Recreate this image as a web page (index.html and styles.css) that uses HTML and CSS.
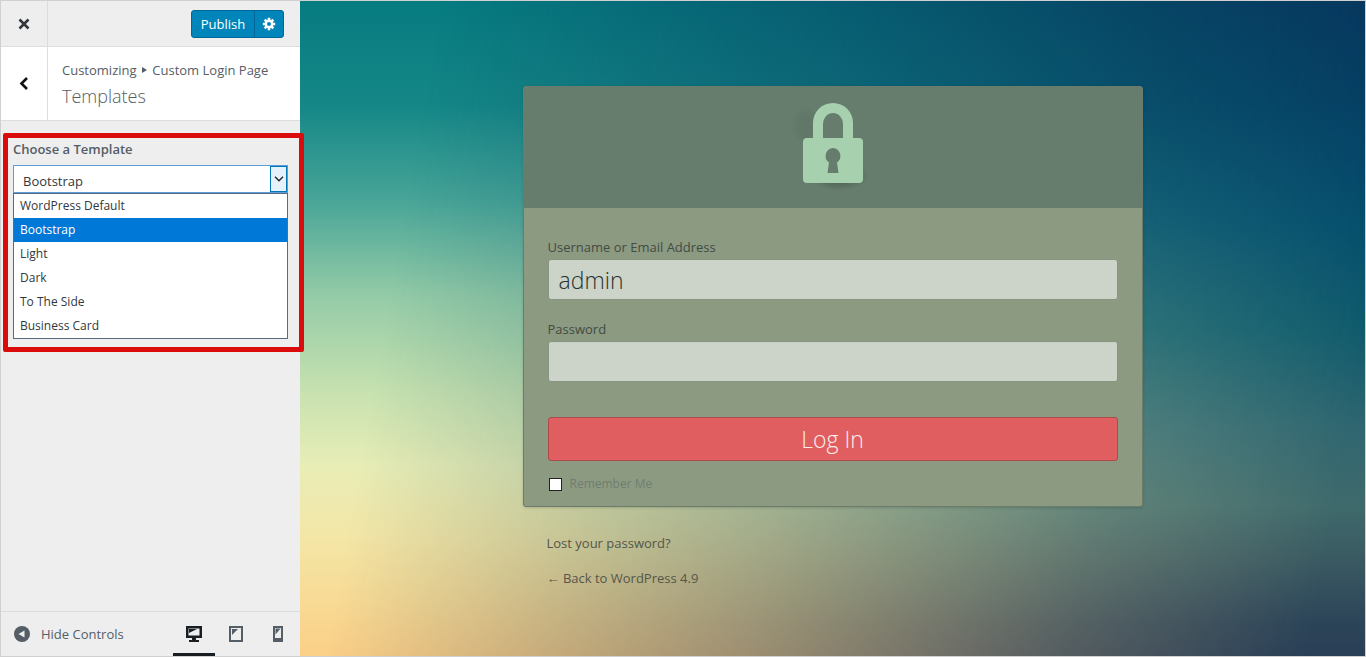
FILE: index.html
```
<!DOCTYPE html>
<html lang="en">

<head>
    <meta charset="UTF-8">
    <meta name="viewport" content="width=device-width, initial-scale=1.0">
    <title>Customize: Custom Login Page</title>
    <link rel="stylesheet" href="styles.css">
</head>

<body>

    <aside class="sidebar">
        <div class="top-bar">
            <button class="close-btn" aria-label="Close">
                <svg width="12" height="12" viewBox="0 0 12 12"><path d="M1.5 1.5l9 9M10.500 1.500l-9 9" stroke="#32373c" stroke-width="2.600"/></svg>
            </button>
            <div class="publish-group">
                <button class="publish-btn">Publish</button>
                <button class="gear-btn" aria-label="Publish settings">
                    <svg width="14" height="14" viewBox="0 0 14 14">
                        <g stroke="#fff" stroke-width="2.600"><path d="M7 .8v12.400M.8 7h12.400M2.700 2.700l8.600 8.600M11.300 2.700l-8.600 8.600"/></g>
                        <circle cx="7" cy="7" r="4.400" fill="#fff"/>
                        <circle cx="7" cy="7" r="2" fill="#0085ba"/>
                    </svg>
                </button>
            </div>
        </div>

        <div class="section-title">
            <button class="back-btn" aria-label="Back">
                <svg width="10" height="14" viewBox="0 0 10 14"><path d="M8 1L2.500 6.500 8 12" fill="none" stroke="#111" stroke-width="2.600"/></svg>
            </button>
            <div class="titles">
                <p class="crumbs">Customizing <svg width="5" height="6" viewBox="0 0 5 6"><path d="M0 0l5 3-5 3z" fill="#555d66"/></svg> Custom Login Page</p>
                <h3>Templates</h3>
            </div>
        </div>

        <div class="controls">
            <label for="template">Choose a Template</label>
            <div class="select-wrap">
                <select id="template">
                    <option>WordPress Default</option>
                    <option selected>Bootstrap</option>
                    <option>Light</option>
                    <option>Dark</option>
                    <option>To The Side</option>
                    <option>Business Card</option>
                </select>
                <span class="arrow">
                    <svg width="10" height="6" viewBox="0 0 10 6"><path d="M1 .8l4 4 4-4" fill="none" stroke="#222" stroke-width="1.300"/></svg>
                </span>
                <ul class="options" role="listbox" aria-label="Templates">
                    <li role="option">WordPress Default</li>
                    <li role="option" class="selected" aria-selected="true">Bootstrap</li>
                    <li role="option">Light</li>
                    <li role="option">Dark</li>
                    <li role="option">To The Side</li>
                    <li role="option">Business Card</li>
                </ul>
            </div>
            <div class="highlight"></div>
        </div>

        <div class="bottom-bar">
            <button class="hide-btn">
                <svg width="16" height="16" viewBox="0 0 16 16"><circle cx="8" cy="8" r="8" fill="#555d66"/><path d="M10.500 4.500v7L4.500 8z" fill="#eee"/></svg>
                Hide Controls
            </button>
            <div class="devices">
                <button class="device active" aria-label="Desktop">
                    <svg width="16" height="16" viewBox="0 0 16 16"><path d="M0 0h16v12h-6v2h3v2H3v-2h3v-2H0zM2.500 2.500v7h11v-7z" fill="#191e23" fill-rule="evenodd"/><path d="M3 3h8L3 7z" fill="#191e23"/></svg>
                </button>
                <button class="device" aria-label="Tablet">
                    <svg width="14" height="16" viewBox="0 0 14 16"><path d="M0 0h14v16H0zM2 2v12h10V2z" fill="#555d66" fill-rule="evenodd"/><path d="M3 3h6L3 9z" fill="#555d66"/></svg>
                </button>
                <button class="device" aria-label="Mobile">
                    <svg width="10" height="16" viewBox="0 0 10 16"><path d="M0 0h10v16H0zM2 2v10h6V2z" fill="#555d66" fill-rule="evenodd"/><path d="M2.500 2.500h5l-5 6z" fill="#555d66"/></svg>
                </button>
            </div>
        </div>
    </aside>

    <main class="preview">
        <div class="login">
            <form class="card">
                <div class="logo">
                    <svg width="96" height="98" viewBox="-10 0 96 98">
                        <defs>
                            <radialGradient id="shade">
                                <stop offset="0.5" stop-color="#56695c"/>
                                <stop offset="1" stop-color="#56695c" stop-opacity="0"/>
                            </radialGradient>
                        </defs>
                        <ellipse cx="44" cy="83" rx="30" ry="15" fill="url(#shade)"/>
                        <ellipse cx="10" cy="32" rx="14" ry="20" fill="url(#shade)" opacity=".3"/>
                        <path d="M18 48V30a20 20 0 0 1 40 0v18z" fill="#a7d1ae"/>
                        <path d="M28 45V31a10 11 0 0 1 20 0v14z" fill="#667d6d"/>
                        <rect x="8" y="45" width="60" height="45" rx="4" fill="#a7d1ae"/>
                        <path d="M38 55a8 8 0 0 1 4 14.500l1.500 10.500h-11l1.500-10.500A8 8 0 0 1 38 55z" fill="#667d6d"/>
                    </svg>
                </div>
                <div class="fields">
                    <label for="user">Username or Email Address</label>
                    <input type="text" id="user" class="input" value="admin">
                    <label for="pass">Password</label>
                    <input type="password" id="pass" class="input">
                    <button type="button" class="login-btn">Log In</button>
                    <div class="remember">
                        <input type="checkbox" id="remember">
                        <label for="remember">Remember Me</label>
                    </div>
                </div>
            </form>
            <div class="links">
                <a href="#">Lost your password?</a>
                <a href="#">← Back to WordPress 4.9</a>
            </div>
        </div>
    </main>

</body>

</html>
```

FILE: styles.css
```
* {
    box-sizing: border-box;
}

body {
    font-family: 'Open Sans', 'Noto Sans', sans-serif;
    font-size: 13px;
    line-height: 20px;
    color: #555d66;
    margin: 0;
    min-height: 100vh;
    display: flex;
    border: 1px solid #d0d0d0;
}

button,
input,
select {
    font-family: inherit;
    font-size: inherit;
    color: inherit;
}

button {
    background: none;
    border: 0;
    padding: 0;
    cursor: pointer;
}

/* Sidebar */
.sidebar {
    position: relative;
    z-index: 1;
    flex: 0 0 299px;
    display: flex;
    flex-direction: column;
    background-color: #eee;
}

.top-bar {
    display: flex;
    justify-content: space-between;
    align-items: center;
    height: 46px;
    padding-right: 16px;
    border-bottom: 1px solid #ddd;
}

.close-btn,
.back-btn {
    display: flex;
    justify-content: center;
    align-items: center;
    align-self: stretch;
    width: 47px;
    border-right: 1px solid #ddd;
}

.publish-group {
    display: flex;
    height: 28px;
    background-color: #0085ba;
    border: 1px solid #006799;
    border-radius: 3px;
    color: #fff;
}

.publish-btn {
    width: 63px;
    padding-top: 1px;
    border-right: 1px solid #006799;
}

.gear-btn {
    display: flex;
    justify-content: center;
    align-items: center;
    width: 28px;
}

.section-title {
    display: flex;
    height: 74px;
    background-color: #fff;
    border-bottom: 1px solid #ddd;
}

.titles {
    padding: 13px 14px;
}

.crumbs {
    margin: 0;
}

.crumbs svg {
    margin: 0 2px;
    vertical-align: 2px;
}

h3 {
    margin: 0;
    font-size: 18px;
    font-weight: 300;
    line-height: 32px;
}

.controls {
    position: relative;
    flex: 1;
    padding: 18px 12px;
}

.controls label {
    display: block;
    font-weight: 600;
    margin-bottom: 6px;
}

.select-wrap {
    position: relative;
}

select {
    appearance: none;
    display: block;
    width: 100%;
    height: 28px;
    padding: 3px 9px 0;
    background-color: #fff;
    border: 1px solid #5b9dd9;
    border-radius: 0;
    color: #32373c;
}

.arrow {
    position: absolute;
    top: 1px;
    right: 1px;
    display: flex;
    justify-content: center;
    align-items: center;
    width: 17px;
    height: 26px;
    background-color: #e5f1fb;
    border: 1px solid #0078b7;
    pointer-events: none;
}

.options {
    position: absolute;
    top: 28px;
    left: 0;
    right: 0;
    margin: 0;
    padding: 0;
    list-style: none;
    font-size: 12px;
    line-height: 24px;
    background-color: #fff;
    border: 1px solid #5a6a80;
    color: #32373c;
}

.options li {
    padding: 0 6px;
}

.options .selected {
    background-color: #0078d7;
    color: #fff;
}

.highlight {
    position: absolute;
    top: 12px;
    left: 2px;
    right: -4px;
    height: 219px;
    border: 5px solid #dc0b0b;
    border-radius: 2px;
    pointer-events: none;
}

.bottom-bar {
    display: flex;
    justify-content: space-between;
    height: 45px;
    padding: 0 1px 0 13px;
    border-top: 1px solid #ddd;
}

.hide-btn {
    display: flex;
    align-items: center;
    gap: 11px;
}

.devices {
    display: flex;
}

.device {
    display: flex;
    justify-content: center;
    align-items: center;
    width: 42px;
    border-top: 3px solid transparent;
    border-bottom: 3px solid transparent;
}

.device.active {
    border-bottom-color: #191e23;
}

/* Login page preview */
.preview {
    position: relative;
    flex: 1;
    display: flex;
    justify-content: center;
    align-items: flex-start;
    padding: 85px 20px 20px;
    background: linear-gradient(#067b80, #158787 16%, #46a497 30%, #94cba7 45%, #c8e2b0 60%, #e8edb6 71%, #f4e6a6 82%, #f8da94 92%, #fbcf87);
}

/* Dark blue side that fades in from the right */
.preview::before {
    content: '';
    position: absolute;
    inset: 0;
    background: linear-gradient(#07345c, #053d62 15%, #044c6c 33%, #0f5a6c 50%, #2f6670 65%, #3f6a6c 77%, #3a5a62 85%, #2c4458 95%, #293f56);
    -webkit-mask-image: linear-gradient(100deg, transparent 12%, rgba(0, 0, 0, 0.25) 31%, rgba(0, 0, 0, 0.45) 48%, rgba(0, 0, 0, 0.8) 75%, #000 95%);
    mask-image: linear-gradient(100deg, transparent 12%, rgba(0, 0, 0, 0.25) 31%, rgba(0, 0, 0, 0.45) 48%, rgba(0, 0, 0, 0.8) 75%, #000 95%);
}

.login {
    position: relative;
    width: 620px;
}

.card {
    background-color: #8d9a82;
    border: 1px solid #6b7c6b;
    border-radius: 3px;
    box-shadow: 0 1px 3px rgba(0, 0, 0, 0.15);
    overflow: hidden;
}

.logo {
    display: flex;
    justify-content: center;
    align-items: flex-start;
    height: 121px;
    padding-top: 6px;
    background-color: #667d6d;
}

.fields {
    padding: 29px 24px 12px;
    color: #414c42;
}

.fields label {
    display: block;
}

.input {
    display: block;
    width: 100%;
    height: 41px;
    margin: 2px 0 19px;
    padding: 0 10px;
    font-size: 23px;
    font-weight: 300;
    color: #29332d;
    background-color: #ccd4c9;
    border: 1px solid #879480;
    border-radius: 3px;
}

.login-btn {
    display: block;
    width: 100%;
    height: 44px;
    margin: 35px 0 13px;
    font-size: 23px;
    font-weight: 300;
    color: #fbeeea;
    background-color: #e05e60;
    border: 1px solid #a94c4b;
    border-radius: 3px;
}

.remember {
    display: flex;
    align-items: center;
    gap: 8px;
    font-size: 12px;
    color: #6e7e70;
}

.remember input {
    appearance: none;
    width: 13px;
    height: 13px;
    margin: 0 0 0 1px;
    background-color: #fff;
    border: 1px solid #222;
}

.links {
    display: flex;
    flex-direction: column;
    align-items: flex-start;
    gap: 15px;
    padding: 26px 24px 0;
}

.links a {
    color: #55564a;
    text-decoration: none;
}
```
